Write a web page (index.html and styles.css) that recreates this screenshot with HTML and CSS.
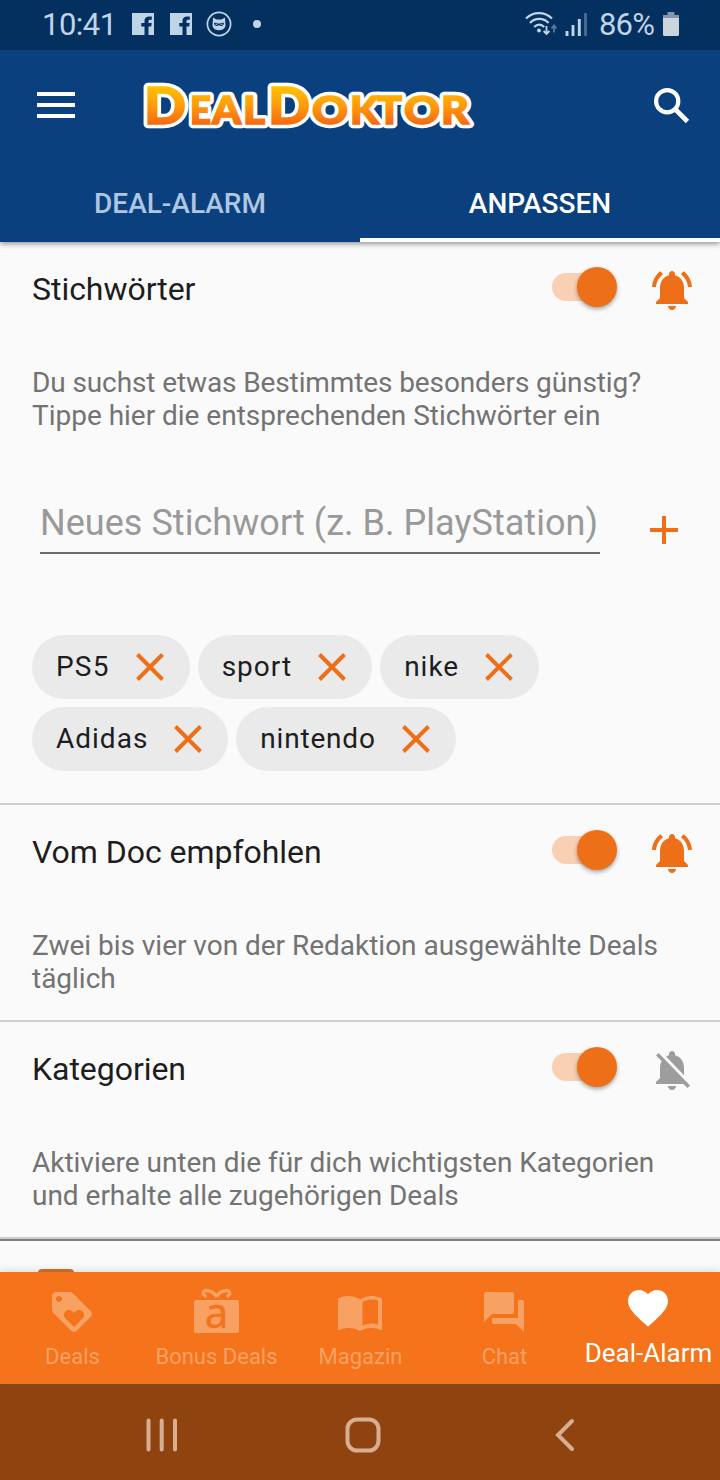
FILE: index.html
```html
<!DOCTYPE html>
<html lang="de">
<head>
<meta charset="utf-8">
<title>DealDoktor – Deal-Alarm</title>
<link rel="stylesheet" href="styles.css">
</head>
<body>
<svg class="defs" width="0" height="0" aria-hidden="true">
  <symbol id="bell-on" viewBox="0 0 24 24"><path d="M7.58 4.08 6.15 2.65C3.75 4.48 2.17 7.3 2.03 10.5h2c.15-2.65 1.51-4.97 3.55-6.42zm12.39 6.42h2c-.15-3.2-1.73-6.02-4.12-7.85l-1.42 1.43c2.02 1.45 3.39 3.77 3.54 6.42zM18 11c0-3.07-1.64-5.64-4.5-6.32V4c0-.83-.67-1.5-1.5-1.5s-1.5.67-1.5 1.5v.68C7.63 5.36 6 7.92 6 11v5l-2 2v1h16v-1l-2-2v-5zm-6 11c.14 0 .27-.01.4-.04.65-.14 1.18-.58 1.44-1.18.1-.24.15-.5.15-.78h-4c.01 1.1.9 2 2.01 2z"/></symbol>
  <symbol id="bell-off" viewBox="0 0 24 24"><path d="M20 18.69 7.84 6.14 5.27 3.49 4 4.76l2.8 2.8v.01c-.52.99-.8 2.16-.8 3.42v5l-2 2v1h13.73l2 2L21 19.72l-1-1.03zM12 22c1.11 0 2-.89 2-2h-4c0 1.11.89 2 2 2zm6-7.32V11c0-3.08-1.64-5.64-4.5-6.32V4c0-.83-.67-1.5-1.5-1.5s-1.5.67-1.5 1.5v.68c-.15.03-.29.08-.42.12-.1.03-.2.07-.3.11h-.01c-.01 0-.01 0-.02.01-.23.09-.46.2-.68.31 0 0-.01 0-.01.01L18 14.68z"/></symbol>
  <symbol id="close" viewBox="0 0 28 28"><path d="M1.5 1.5l25 25M26.5 1.5l-25 25" fill="none" stroke="currentColor" stroke-width="4"/></symbol>
  <symbol id="facebook" viewBox="0 0 22 22"><path fill-rule="evenodd" d="M0 0h22v22h-5.500v-8.500h2.700l.5-3.500h-3.200V8.300c0-1 .5-1.500 1.700-1.500h1.600V3.600c-4.500-.7-7.300.6-7.300 4.200V10H9.300v3.500h3.200V22H0z"/></symbol>
</svg>
<div class="screen">
  <header class="statusbar">
    <span class="clock">10:41</span>
    <svg class="fb" width="22" height="22"><use href="#facebook"/></svg>
    <svg class="fb" width="22" height="22"><use href="#facebook"/></svg>
    <svg class="cat" width="26" height="26" viewBox="0 0 26 26"><circle cx="13" cy="13" r="11.600" fill="none" stroke="#c0d4e8" stroke-width="1.700"/><path fill="#c0d4e8" d="M7 6.500l3.500 2h5l3.500-2 .3 5.500c1.200 4.600-2 7.200-6.300 7.200S5.500 16.600 6.700 12z"/><path d="M8 12c2-.3 3.200-.1 5 .7 1.800-.8 3-1 5-.7 0 3-3.500 3.800-5 2-1.500 1.800-5 1-5-2z" fill="#04305f"/><path d="M9.500 13.200h2M14.500 13.200h2" stroke="#c0d4e8"/></svg>
    <span class="dot"></span>
    <svg class="wifi" width="32" height="26" viewBox="0 0 32 26" fill="none" stroke="#c0d4e8" stroke-width="2.200"><path d="M1 7.500C8 .2 20 .2 27 7.500M5 12c5-5.500 13.500-5.500 18.500 0M9.200 16c3-3.300 7-3.300 10 0"/><circle cx="14" cy="19.500" r="1.900" fill="#c0d4e8" stroke="none"/><path d="M21.500 15v8M18.600 20l2.900 3 2.900-3" stroke-width="1.800"/><path d="M29 21.500v-6M26.500 17.500l2.500-3 2.500 3" stroke="#59799b" stroke-width="1.800"/></svg>
    <svg class="signal" width="23" height="24" viewBox="0 0 23 24" stroke="#c0d4e8" stroke-width="2.900"><path d="M2 19v5M8 13v11M14.300 7v17"/><path d="M20.500 1v23" stroke="#4a6b8f"/></svg>
    <span class="percent">86%</span>
    <svg class="battery" width="16" height="24" viewBox="0 0 16 24"><path fill="#7e98ae" d="M4.500 0h7v3H16v3H0V3h4.500z"/><path fill="#cbd5dc" d="M0 6h16v16.500q0 1.500-1.500 1.500h-13Q0 24 0 22.500z"/></svg>
  </header>

  <div class="appbar">
    <svg class="menu" width="38" height="26" viewBox="0 0 38 26"><path d="M0 2h38M0 13h38M0 24h38" stroke="#fff" stroke-width="4"/></svg>
    <svg class="logo" width="336" height="56" viewBox="0 0 336 56" role="img" aria-label="DealDoktor">
      <defs>
        <linearGradient id="gold" gradientUnits="userSpaceOnUse" x1="0" y1="8" x2="0" y2="46"><stop offset="0" stop-color="#ffc400"/><stop offset=".5" stop-color="#ff9c0c"/><stop offset="1" stop-color="#f66a12"/></linearGradient>
        <g id="wordmark">
          <text x="4" y="46" font-size="51.500" textLength="42" lengthAdjust="spacingAndGlyphs">D</text>
          <text x="50" y="46" font-size="38.500" textLength="21" lengthAdjust="spacingAndGlyphs">E</text>
          <text x="72" y="46" font-size="38.500" textLength="29" lengthAdjust="spacingAndGlyphs">A</text>
          <text x="103" y="46" font-size="38.500" textLength="22" lengthAdjust="spacingAndGlyphs">L</text>
          <text x="128" y="46" font-size="51.500" textLength="42" lengthAdjust="spacingAndGlyphs">D</text>
          <text x="172" y="46" font-size="38" textLength="36" lengthAdjust="spacingAndGlyphs">O</text>
          <text x="210" y="46" font-size="38.500" textLength="29" lengthAdjust="spacingAndGlyphs">K</text>
          <text x="237" y="46" font-size="38.500" textLength="25" lengthAdjust="spacingAndGlyphs">T</text>
          <text x="264" y="46" font-size="38" textLength="36" lengthAdjust="spacingAndGlyphs">O</text>
          <text x="301" y="46" font-size="38.500" textLength="28" lengthAdjust="spacingAndGlyphs">R</text>
        </g>
      </defs>
      <use href="#wordmark" class="logo-outline"/>
      <use href="#wordmark" class="logo-fill"/>
    </svg>
    <svg class="search" width="36" height="36" viewBox="0 0 36 36" fill="none" stroke="#fff"><circle cx="13.200" cy="13.200" r="11.100" stroke-width="4.200"/><path d="M21.500 21.500l12 12" stroke-width="4.600"/></svg>
  </div>

  <nav class="tabs">
    <div class="tab"><span>DEAL-ALARM</span></div>
    <div class="tab active"><span>ANPASSEN</span></div>
  </nav>

  <main class="content">
    <section class="section">
      <div class="heading"><h2>Stichwörter</h2><span class="switch"><i></i></span><svg class="bell" width="48" height="48"><use href="#bell-on"/></svg></div>
      <p><span class="snug">Du suchst etwas Bestimmtes besonders günstig?</span><br><span>Tippe hier die entsprechenden Stichwörter ein</span></p>
      <div class="entry">
        <div class="field"><span>Neues Stichwort (z. B. PlayStation)</span></div>
        <svg class="plus" width="28" height="28" viewBox="0 0 28 28"><path d="M14 0v28M0 14h28" stroke="#ed7019" stroke-width="4"/></svg>
      </div>
      <div class="chips">
        <span class="chip wide"><b>PS5</b><svg width="28" height="28"><use href="#close"/></svg></span>
        <span class="chip"><b>sport</b><svg width="28" height="28"><use href="#close"/></svg></span>
        <span class="chip"><b>nike</b><svg width="28" height="28"><use href="#close"/></svg></span>
        <span class="chip"><b>Adidas</b><svg width="28" height="28"><use href="#close"/></svg></span>
        <span class="chip tight"><b>nintendo</b><svg width="28" height="28"><use href="#close"/></svg></span>
      </div>
    </section>
    <section class="section">
      <div class="heading"><h2>Vom Doc empfohlen</h2><span class="switch"><i></i></span><svg class="bell" width="48" height="48"><use href="#bell-on"/></svg></div>
      <p><span>Zwei bis vier von der Redaktion ausgewählte Deals</span><br><span>täglich</span></p>
    </section>
    <section class="section">
      <div class="heading"><h2>Kategorien</h2><span class="switch"><i></i></span><svg class="bell muted" width="48" height="48"><use href="#bell-off"/></svg></div>
      <p><span>Aktiviere unten die für dich wichtigsten Kategorien</span><br><span>und erhalte alle zugehörigen Deals</span></p>
    </section>
    <div class="category-list"><span class="checkbox"></span></div>
  </main>

  <nav class="bottomnav">
    <div class="item"><svg width="48" height="48" viewBox="0 0 24 24"><path fill-rule="evenodd" d="M21.410 11.580l-9-9C12.050 2.220 11.550 2 11 2H4c-1.100 0-2 .9-2 2v7c0 .55.22 1.050.59 1.420l9 9c.36.36.86.58 1.410.58.55 0 1.050-.22 1.410-.59l7-7c.37-.36.59-.86.59-1.410 0-.55-.23-1.060-.59-1.420zM5.500 7C4.670 7 4 6.330 4 5.500S4.670 4 5.500 4 7 4.670 7 5.500 6.330 7 5.500 7zm11.770 8.270L13 19.540l-4.270-4.270C8.280 14.810 8 14.190 8 13.500c0-1.380 1.120-2.500 2.500-2.500.69 0 1.320.28 1.770.74l.73.720.730-.730c.45-.450 1.080-.730 1.770-.730 1.380 0 2.500 1.120 2.500 2.500 0 .69-.28 1.320-.73 1.770z"/></svg><span>Deals</span></div>
    <div class="item"><svg class="gift" width="48" height="48" viewBox="0 0 48 48"><rect x="2" y="12" width="45" height="33" rx="2"/><path d="M24.500 9C22 3 13 1 11.500 4c-1 2 1 4 3 4.500M24.500 9C27 3 36 1 37.500 4c1 2-1 4-3 4.500" fill="none" stroke="#f7a163" stroke-width="3.300"/><text class="gift-letter" x="24.500" y="39.500">a</text></svg><span>Bonus Deals</span></div>
    <div class="item"><svg width="48" height="48" viewBox="0 0 48 48"><path fill-rule="evenodd" d="M24 11.500C17 7 9 7 2 10.500v32C9 39 17 39 24 43c7-4 15-4 22-.5v-32C39 7 31 7 24 11.500zm2.500 2.500C32 11 37 10.700 42 12.600v24c-5-1.500-10-1.400-15.500 1.200z"/></svg><span>Magazin</span></div>
    <div class="item"><svg width="48" height="48" viewBox="0 0 24 24"><path d="M21 6h-2v9H6v2c0 .55.450 1 1 1h11l4 4V7c0-.55-.45-1-1-1zm-4 6V3c0-.55-.45-1-1-1H3c-.55 0-1 .45-1 1v14l4-4h10c.55 0 1-.45 1-1z"/></svg><span>Chat</span></div>
    <div class="item selected"><svg width="48" height="48" viewBox="0 0 24 24"><path d="M12 21.350l-1.450-1.320C5.400 15.360 2 12.280 2 8.500 2 5.420 4.420 3 7.500 3c1.740 0 3.410.81 4.500 2.090C13.090 3.810 14.760 3 16.500 3 19.580 3 22 5.420 22 8.500c0 3.780-3.400 6.860-8.550 11.540L12 21.350z"/></svg><span>Deal-Alarm</span></div>
  </nav>

  <footer class="sysnav">
    <svg width="32" height="34" viewBox="0 0 32 34"><path d="M2.500 2.500v29M15.700 2.500v29M29 2.500v29" stroke="#d8ae93" stroke-width="4" stroke-linecap="round"/></svg>
    <svg class="home" width="36" height="36" viewBox="0 0 36 36"><rect x="2.500" y="2.500" width="31" height="31" rx="9.500" fill="none" stroke="#d8ae93" stroke-width="4"/></svg>
    <svg width="20" height="34" viewBox="0 0 20 34"><path d="M17 3L3 17l14 14" fill="none" stroke="#d8ae93" stroke-width="4" stroke-linecap="round"/></svg>
  </footer>
</div>
</body>
</html>
```

FILE: styles.css
```css
* { box-sizing: border-box; }
body { margin: 0; font-family: Roboto, "Noto Sans", sans-serif; background: #fafafa; color: #1d1d1d; }
.defs { display: block; position: absolute; }
svg { display: block; flex: none; }
.screen { width: 720px; height: 1480px; display: flex; flex-direction: column; overflow: hidden; }

.statusbar { height: 50px; flex: none; background: #04305f; color: #c0d4e8; display: flex; align-items: center; padding: 0 41px 2px 42px; font-size: 31px; }
.clock { width: 90px; white-space: nowrap; letter-spacing: -0.5px; }
.fb { fill: #c0d4e8; margin-right: 16px; }
.cat { margin-left: -2px; }
.dot { width: 8px; height: 8px; border-radius: 50%; background: #c0d4e8; margin-left: 21px; }
.wifi { margin-left: auto; }
.signal { margin-left: 8px; }
.percent { margin-left: 11px; width: 56px; white-space: nowrap; letter-spacing: -0.8px; }
.battery { margin-left: 8px; }

.appbar { height: 112px; flex: none; background: #0b407e; display: flex; align-items: center; padding: 0 30px 0 37px; position: relative; z-index: 1; }
.menu { margin-bottom: 2px; }
.logo { margin-left: 65px; overflow: visible; font-family: Lato, "Open Sans", sans-serif; font-weight: 900; }
.logo-outline { fill: #fff; stroke: #fff; stroke-width: 8.5px; stroke-linejoin: round; }
.logo-fill { fill: url(#gold); stroke: url(#gold); stroke-width: 1.5px; }
.search { margin-left: auto; margin-bottom: 1px; }

.tabs { height: 80px; flex: none; display: flex; background: #0b407e; position: relative; box-shadow: 0 2px 5px rgba(0, 0, 0, .4); }
.tab { flex: 1; display: flex; align-items: center; justify-content: center; padding-top: 7px; font-size: 28px; font-weight: 500; color: #afc5e0; border-bottom: 4px solid transparent; }
.tab.active { color: #fff; border-bottom-color: #fff; }

.content { height: 1030px; flex: none; overflow: hidden; }
.section { border-bottom: 2px solid #cdcfcf; padding-bottom: 25px; }
.heading { height: 94px; display: flex; align-items: center; padding: 0 24px 0 32px; }
.heading h2 { margin: 0; font-size: 32px; font-weight: 400; flex: 1; letter-spacing: -0.04px; }
.switch { width: 65px; height: 40px; margin: 0 31px 4px 0; display: flex; align-items: center; }
.switch::before { content: ""; width: 46px; height: 28px; border-radius: 14px 0 0 14px; background: #f9d0b3; margin-right: -21px; flex: none; }
.switch i { width: 40px; height: 40px; border-radius: 50%; background: #ed7019; box-shadow: 0 2px 4px rgba(0, 0, 0, .35); flex: none; }
.bell { fill: #ed7019; margin-top: 1px; }
.bell.muted { fill: #9d9d9d; }
.section p { margin: 30px 0 0 32px; font-size: 28px; line-height: 33px; color: #737373; white-space: nowrap; letter-spacing: -0.02px; }
.section .snug { letter-spacing: -0.11px; }

.entry { display: flex; align-items: flex-end; padding: 66px 42px 0 40px; justify-content: space-between; }
.field { width: 560px; height: 56px; border-bottom: 2px solid #6d6d6d; font-size: 36px; line-height: 51px; letter-spacing: 0.04px; color: #999; white-space: nowrap; }
.plus { margin-bottom: 10px; }
.chips { display: flex; flex-wrap: wrap; gap: 8px; padding: 81px 100px 7px 32px; }
.chip { height: 64px; border-radius: 32px; background: #eaeaea; display: flex; align-items: center; gap: 26px; padding: 0 26px 0 24px; font-size: 28px; letter-spacing: 1px; }
.chip b { font-weight: 400; margin-bottom: 2px; }
.chip.wide { letter-spacing: 1.2px; }
.chip.tight { letter-spacing: 0.8px; }
.chip svg { color: #ed7019; }

.category-list { border-top: 2px solid #7f7f7f; padding: 28px 38px; }
.checkbox { display: block; width: 36px; height: 36px; border-radius: 4px; background: #d6691f; }

.bottomnav { height: 112px; flex: none; background: #f5731a; display: grid; grid-template-columns: repeat(5, 144px); position: relative; box-shadow: 0 -1px 8px rgba(60, 100, 120, .22); }
.item { display: flex; flex-direction: column; align-items: center; padding-top: 16px; color: #f7a163; font-size: 22px; line-height: 26px; white-space: nowrap; }
.item svg { fill: #f7a163; overflow: visible; }
.item span { margin-top: 8px; padding-left: 1px; }
.item.selected { color: #fff; font-size: 26px; padding-top: 12px; }
.item.selected svg { fill: #fff; }
.gift-letter { font: 42px "Noto Sans", sans-serif; text-anchor: middle; fill: #f5731a; stroke: #f5731a; stroke-width: .5px; }

.sysnav { height: 96px; flex: none; background: #8f4410; display: flex; align-items: center; justify-content: space-between; padding: 6px 145px 0 146px; }
.home { margin-right: 8px; }
```
